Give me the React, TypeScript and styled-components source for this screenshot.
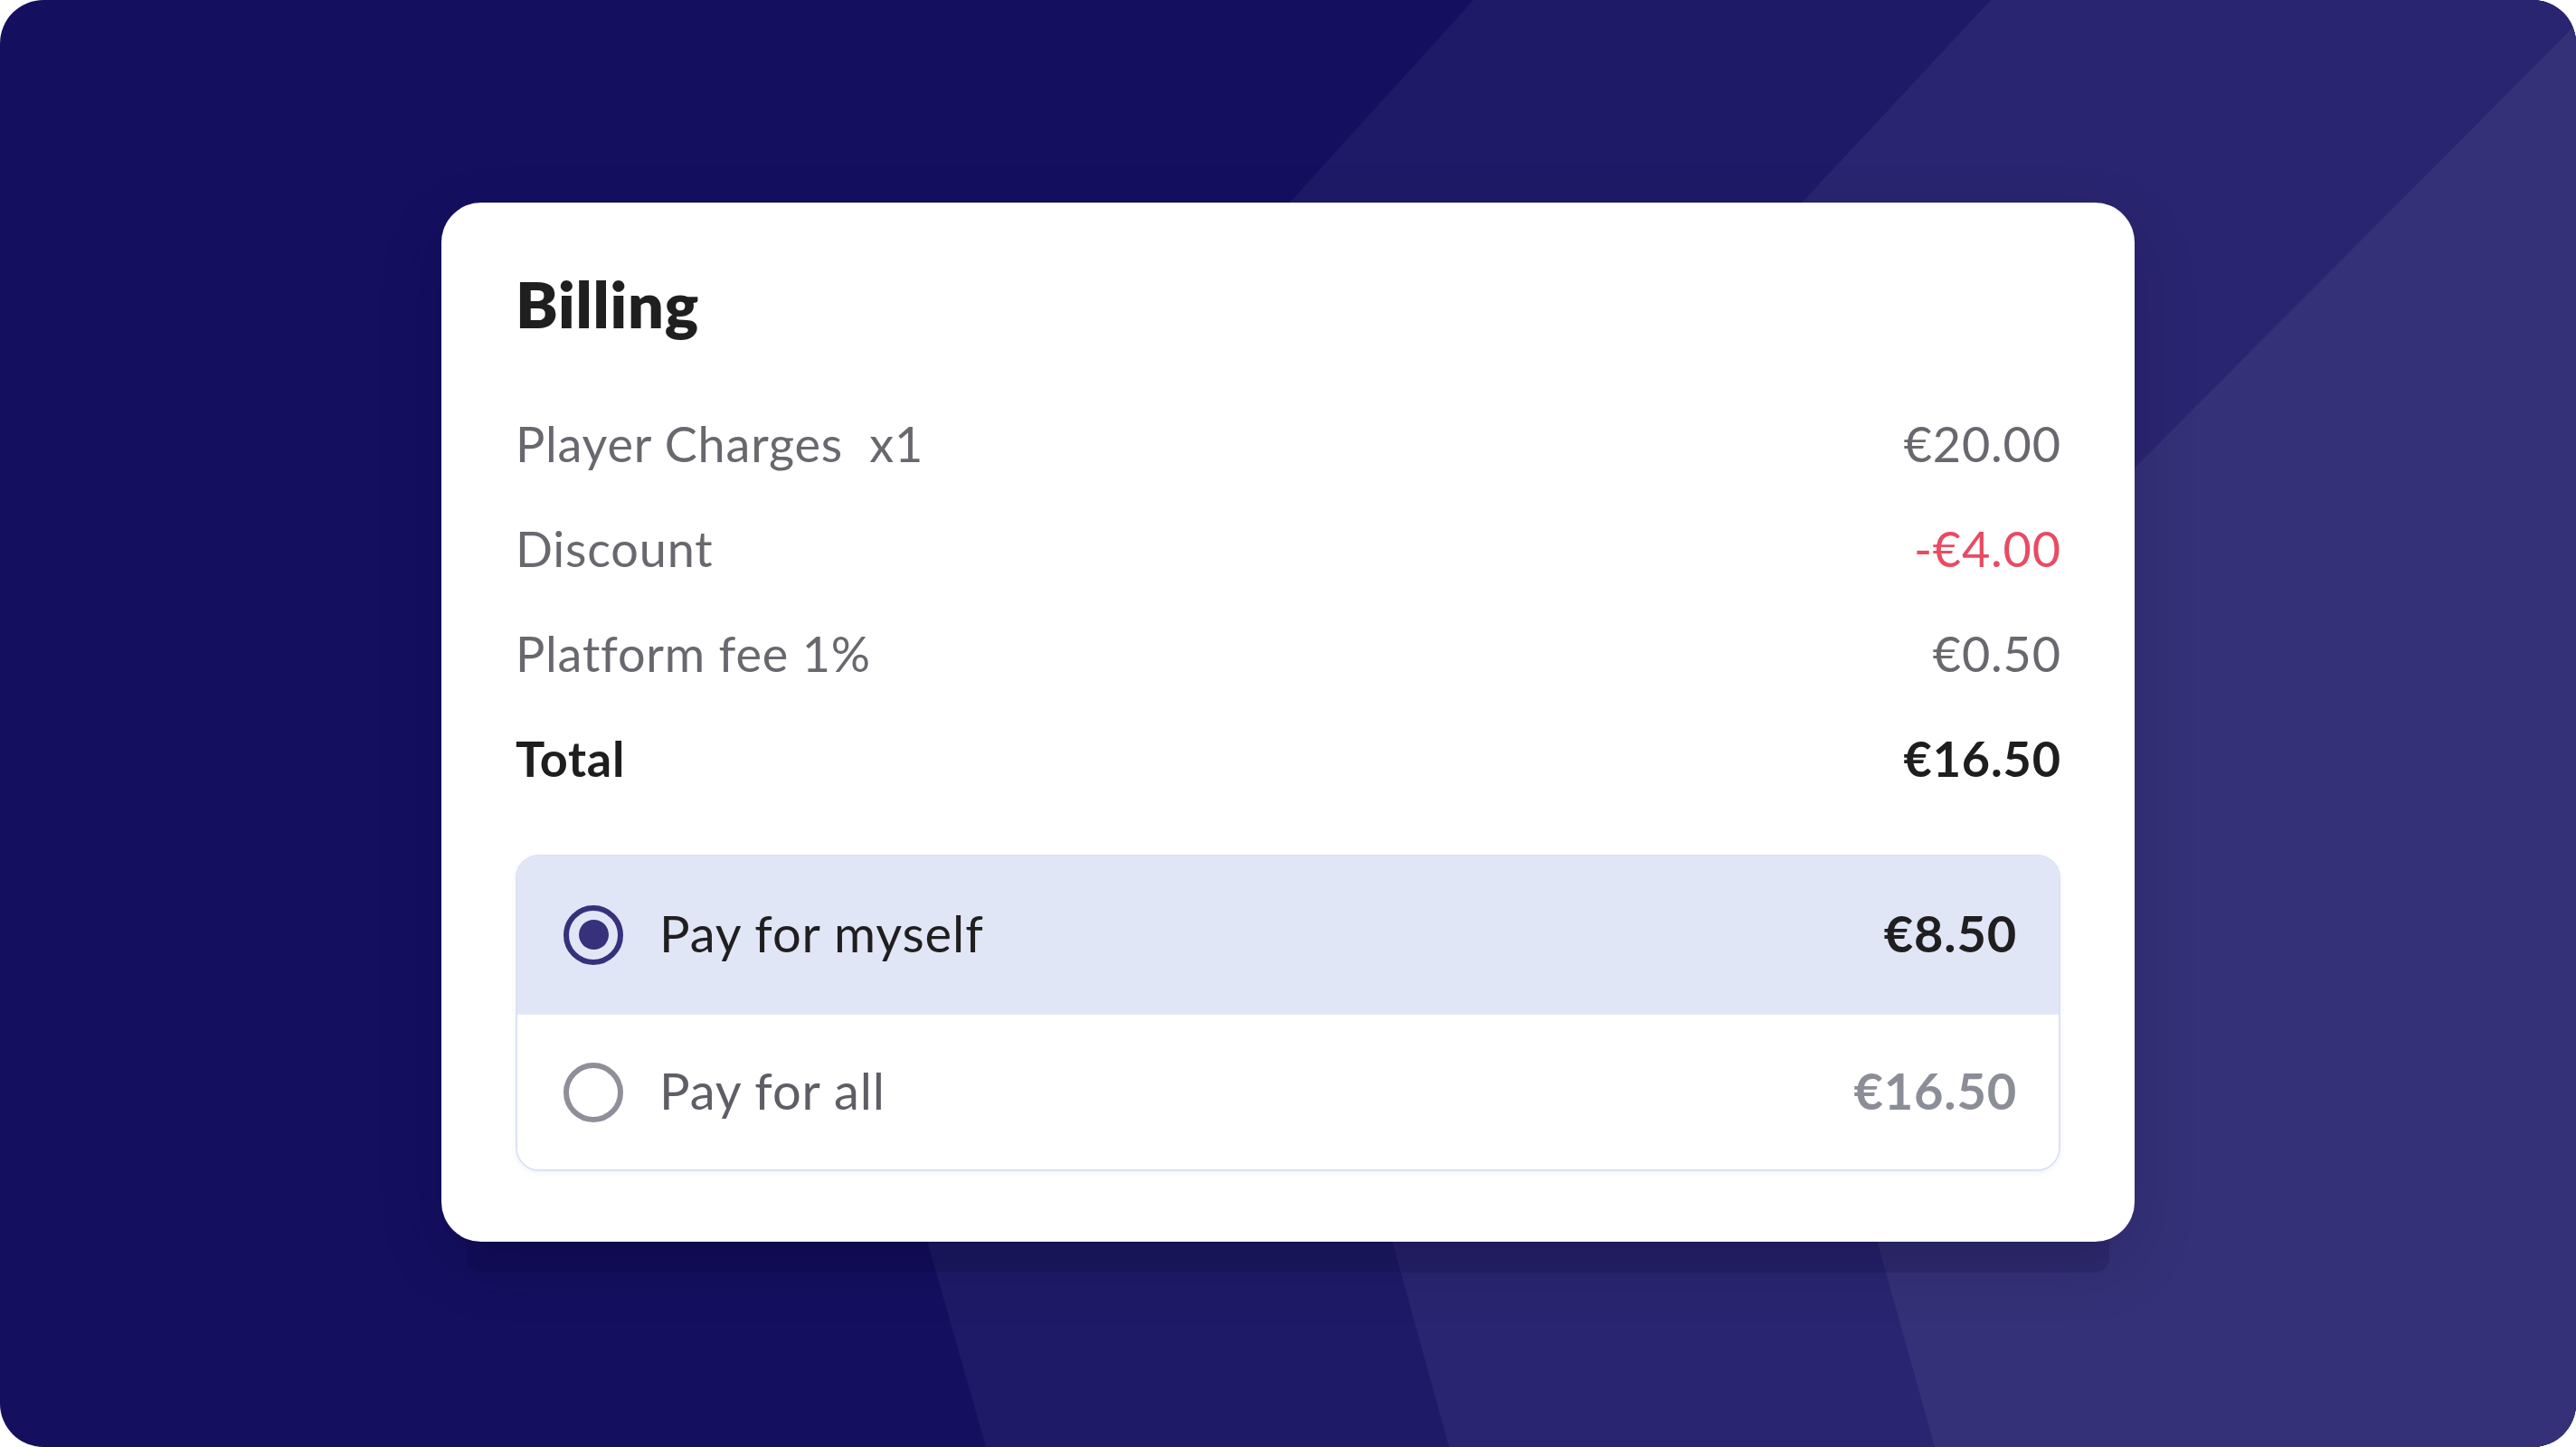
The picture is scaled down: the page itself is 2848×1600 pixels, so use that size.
import React from "react";
import styled, { createGlobalStyle } from "styled-components";

const Global = createGlobalStyle`
  html, body { margin: 0; padding: 0; background: #ffffff; }
  body { font-family: "Lato", "Inter", sans-serif; }
  * { box-sizing: border-box; }
`;

const Frame = styled.div`
  position: relative;
  width: 2848px;
  height: 1600px;
  border-radius: 48px;
  overflow: hidden;
  background: #140f5f;
  display: flex;
  align-items: flex-start;
  padding: 224px 0 0 488px;
`;

const Backdrop = styled.svg`
  position: absolute;
  inset: 0;
  width: 100%;
  height: 100%;
  z-index: 0;
`;

const Card = styled.section`
  position: relative;
  z-index: 1;
  width: 1872px;
  background: #ffffff;
  border-radius: 44px;
  padding: 77px 82px 78px;
  display: flex;
  flex-direction: column;
  box-shadow: 0 62px 0 -28px rgba(8, 5, 48, 0.16), 0 24px 70px rgba(6, 4, 40, 0.16);
`;

const Title = styled.h1`
  margin: 0 0 93px;
  font-family: "Lato", "Inter", sans-serif;
  font-weight: 800;
  font-size: 70px;
  line-height: 70px;
  letter-spacing: 0.8px;
  color: #1f1f1f;
`;

const Lines = styled.div`
  display: flex;
  flex-direction: column;
  gap: 62px;
  margin-bottom: 79px;
`;

const Line = styled.div`
  display: flex;
  justify-content: space-between;
  align-items: baseline;
  font-size: 54px;
  line-height: 54px;
  letter-spacing: 0.8px;
`;

const Label = styled.span<{ $strong?: boolean }>`
  color: ${(p) => (p.$strong ? "#1e1e1e" : "#68686e")};
  font-weight: ${(p) => (p.$strong ? 700 : 400)};
  white-space: pre;
`;

const Amount = styled.span<{ $tone?: "muted" | "danger" | "strong" }>`
  color: ${(p) =>
    p.$tone === "danger" ? "#e94b62" : p.$tone === "strong" ? "#1e1e1e" : "#68686e"};
  font-weight: ${(p) => (p.$tone === "strong" ? 700 : 400)};
  margin-right: -0.8px;
`;

const Options = styled.div`
  border: 2px solid #dce2f3;
  border-radius: 26px;
  overflow: hidden;
  display: flex;
  flex-direction: column;
  box-shadow: 0 2px 6px rgba(60, 70, 140, 0.06);
`;

const Option = styled.label<{ $selected?: boolean }>`
  height: 173px;
  display: flex;
  align-items: center;
  padding: 0 46px 0 51px;
  background: ${(p) => (p.$selected ? "#e1e6f7" : "#ffffff")};
  & + & {
    border-top: 2px solid #e6eaf6;
  }
`;

const Radio = styled.span<{ $checked?: boolean }>`
  width: 66px;
  height: 66px;
  flex: none;
  border-radius: 50%;
  border: 6px solid ${(p) => (p.$checked ? "#37317c" : "#8e8f99")};
  display: flex;
  align-items: center;
  justify-content: center;
  margin-right: 40px;
  &::after {
    content: "";
    display: ${(p) => (p.$checked ? "block" : "none")};
    width: 33px;
    height: 33px;
    border-radius: 50%;
    background: #37317c;
  }
`;

const OptionText = styled.span<{ $selected?: boolean }>`
  flex: 1;
  font-size: 56px;
  line-height: 56px;
  letter-spacing: 0.9px;
  margin-top: -4px;
  color: ${(p) => (p.$selected ? "#1f1f1f" : "#5e5e66")};
`;

const OptionPrice = styled.span<{ $selected?: boolean }>`
  font-size: 56px;
  line-height: 56px;
  font-weight: 700;
  letter-spacing: 0.8px;
  margin-top: -4px;
  color: ${(p) => (p.$selected ? "#1f1f1f" : "#8b8d97")};
`;

const lines = [
  { label: "Player Charges  x1", amount: "€20.00" },
  { label: "Discount", amount: "-€4.00", tone: "danger" as const },
  { label: "Platform fee 1%", amount: "€0.50" },
  { label: "Total", amount: "€16.50", tone: "strong" as const, strong: true },
];

const options = [
  { label: "Pay for myself", price: "€8.50", selected: true },
  { label: "Pay for all", price: "€16.50", selected: false },
];

export default function App() {
  return (
    <>
      <Global />
      <Frame>
        <Backdrop viewBox="0 0 2848 1600" preserveAspectRatio="none" aria-hidden>
          <polygon points="1629,0 2848,0 2848,1600 1090,1600 872,835" fill="#1f1a67" />
          <polygon points="2201,0 2848,0 2848,1600 1602,1600 1398,861" fill="#2a2570" />
          <polygon points="2875,0 2848,1600 2139,1600 1951,928 2875,0" fill="#353178" />
        </Backdrop>
        <Card>
          <Title>Billing</Title>
          <Lines>
            {lines.map((l) => (
              <Line key={l.label}>
                <Label $strong={l.strong}>{l.label}</Label>
                <Amount $tone={l.tone}>{l.amount}</Amount>
              </Line>
            ))}
          </Lines>
          <Options>
            {options.map((o) => (
              <Option key={o.label} $selected={o.selected}>
                <Radio $checked={o.selected} />
                <OptionText $selected={o.selected}>{o.label}</OptionText>
                <OptionPrice $selected={o.selected}>{o.price}</OptionPrice>
              </Option>
            ))}
          </Options>
        </Card>
      </Frame>
    </>
  );
}
